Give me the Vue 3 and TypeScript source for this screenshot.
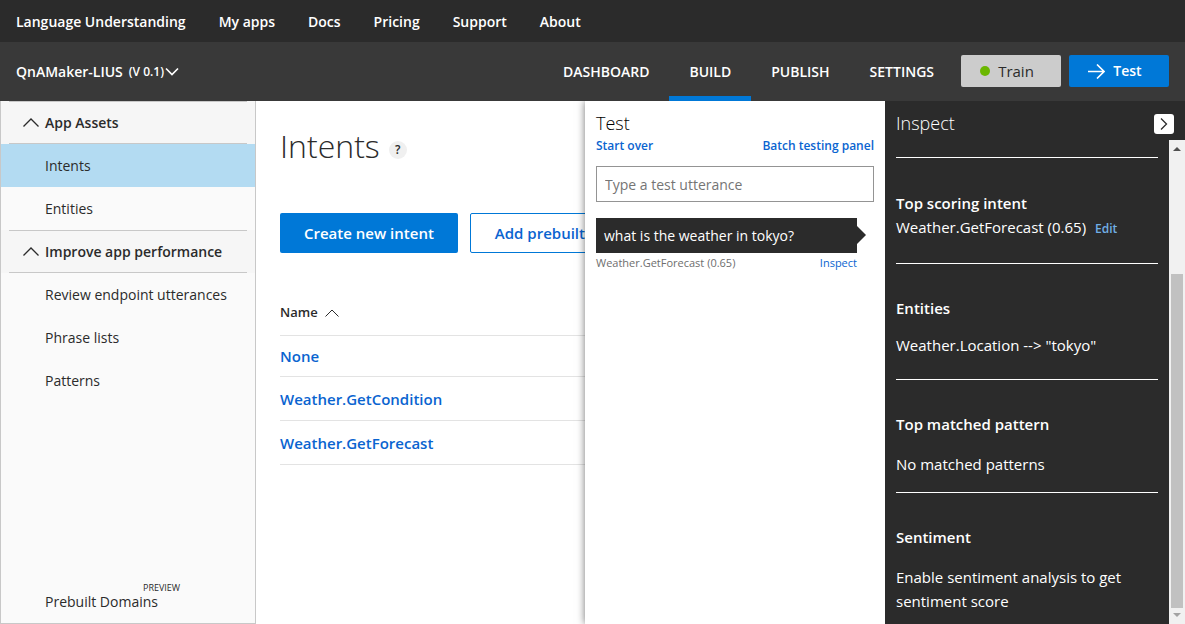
<script setup lang="ts">
import { ref } from 'vue'

interface SideGroup {
  title: string
  items: string[]
}

const siteLinks: string[] = ['Language Understanding', 'My apps', 'Docs', 'Pricing', 'Support', 'About']
const tabs: string[] = ['DASHBOARD', 'BUILD', 'PUBLISH', 'SETTINGS']
const activeTab = ref('BUILD')
const activeItem = ref('Intents')
const utterance = ref('')

const groups: SideGroup[] = [
  { title: 'App Assets', items: ['Intents', 'Entities'] },
  { title: 'Improve app performance', items: ['Review endpoint utterances', 'Phrase lists', 'Patterns'] },
]

const intents: string[] = ['None', 'Weather.GetCondition', 'Weather.GetForecast']
</script>

<template>
  <div class="app">
    <nav class="site-bar">
      <a v-for="link in siteLinks" :key="link" href="#">{{ link }}</a>
    </nav>

    <header class="app-bar">
      <button class="app-name" type="button">
        <span>QnAMaker-LIUS</span>
        <span class="version">(V 0.1)</span>
        <svg width="14" height="9" viewBox="0 0 14 9"><path d="M1 1.5 L7 7.5 L13 1.5" /></svg>
      </button>
      <nav class="tabs">
        <a v-for="tab in tabs" :key="tab" href="#" :class="{ active: tab === activeTab }" @click.prevent="activeTab = tab">{{ tab }}</a>
      </nav>
      <div class="actions">
        <button class="train" type="button"><span class="dot"></span>Train</button>
        <button class="test" type="button">
          <svg width="17" height="15" viewBox="0 0 17 15"><path d="M0 7.5 H16 M9 0.5 L16 7.5 L9 14.5" /></svg>Test
        </button>
      </div>
    </header>

    <div class="body">
      <aside class="sidebar">
        <section v-for="group in groups" :key="group.title">
          <button class="group-head" type="button">
            <span class="group-line">
              <svg width="16" height="9" viewBox="0 0 16 9"><path d="M0.5 8.5 L8 1 L15.5 8.5" /></svg>
              {{ group.title }}
            </span>
          </button>
          <a v-for="item in group.items" :key="item" href="#" class="item" :class="{ active: item === activeItem }" @click.prevent="activeItem = item">{{ item }}</a>
        </section>
        <a href="#" class="item last"><span class="domains">Prebuilt Domains<span class="preview">PREVIEW</span></span></a>
      </aside>

      <main class="main">
        <div class="title-row">
          <h1>Intents</h1>
          <button class="help" type="button" aria-label="Help">?</button>
        </div>
        <div class="buttons">
          <button class="primary" type="button">Create new intent</button>
          <button class="secondary" type="button">Add prebuilt</button>
        </div>
        <table>
          <thead>
            <tr>
              <th scope="col">Name <svg width="14" height="8" viewBox="0 0 14 8"><path d="M0.5 7.5 L7 1 L13.5 7.5" /></svg></th>
            </tr>
          </thead>
          <tbody>
            <tr v-for="intent in intents" :key="intent">
              <td><a href="#">{{ intent }}</a></td>
            </tr>
          </tbody>
        </table>
      </main>

      <section class="test-panel">
        <h2>Test</h2>
        <div class="test-links">
          <a href="#">Start over</a>
          <a href="#">Batch testing panel</a>
        </div>
        <input v-model="utterance" type="text" placeholder="Type a test utterance" aria-label="Type a test utterance" />
        <div class="bubble">what is the weather in tokyo?</div>
        <div class="result">
          <span>Weather.GetForecast (0.65)</span>
          <a href="#">Inspect</a>
        </div>
      </section>

      <section class="inspect">
        <div class="inspect-head">
          <h2>Inspect</h2>
          <button class="collapse" type="button" aria-label="Collapse">
            <svg width="8" height="12" viewBox="0 0 8 12"><path d="M1 0.5 L6.5 6 L1 11.5" /></svg>
          </button>
        </div>
        <div class="inspect-body">
          <div class="details">
            <article class="block scoring">
              <h3>Top scoring intent</h3>
              <p>Weather.GetForecast (0.65) <a href="#">Edit</a></p>
            </article>
            <article class="block entity">
              <h3>Entities</h3>
              <p>Weather.Location --&gt; "tokyo"</p>
            </article>
            <article class="block pattern">
              <h3>Top matched pattern</h3>
              <p>No matched patterns</p>
            </article>
            <article class="block">
              <h3>Sentiment</h3>
              <p>Enable sentiment analysis to get sentiment score</p>
            </article>
          </div>
          <div class="scrollbar" aria-hidden="true">
            <svg class="up" width="16" height="16" viewBox="0 0 16 16"><path d="M4 11 L8 7 L12 11 Z" /></svg>
            <span class="space-above"></span>
            <span class="thumb"></span>
            <svg class="down" width="16" height="16" viewBox="0 0 16 16"><path d="M4 5 L8 9 L12 5 Z" /></svg>
          </div>
        </div>
      </section>
    </div>
  </div>
</template>

<style>
body {
  margin: 0;
}
</style>

<style scoped>
.app {
  display: flex;
  flex-direction: column;
  height: 100vh;
  min-height: 600px;
  overflow: hidden;
  background: #fff;
  color: #2b2b2b;
  font-family: "Open Sans", "Noto Sans", sans-serif;
  font-size: 14px;
  line-height: 24px;
}
.app * {
  box-sizing: border-box;
}
a {
  color: #0a64d0;
  text-decoration: none;
}
button {
  margin: 0;
  padding: 0;
  border: 0;
  background: none;
  color: inherit;
  font: inherit;
  cursor: pointer;
}
h1, h2, h3, p {
  margin: 0;
}
svg {
  flex: none;
}
path {
  fill: none;
  stroke: currentColor;
}
.site-bar {
  display: flex;
  flex: none;
  align-items: center;
  gap: 33px;
  height: 42px;
  padding: 1px 16px 0;
  background: #2b2b2b;
  font-weight: 600;
}
.site-bar a {
  color: #fff;
}
.app-bar {
  display: flex;
  flex: none;
  align-items: center;
  height: 59px;
  padding: 0 16px;
  background: #393939;
  color: #fff;
}
.app-name {
  display: flex;
  align-items: center;
  font-weight: 600;
}
.app-name path {
  stroke-width: 1.7;
}
.version {
  margin: 0 1px 0 6px;
  font-size: 12px;
}
.tabs {
  display: flex;
  align-self: stretch;
  margin-left: auto;
}
.tabs a {
  padding: 18px 20px 12px;
  border-bottom: 5px solid transparent;
  color: #fff;
  font-weight: 600;
}
.tabs a.active {
  border-color: #0078d7;
}
.actions {
  display: flex;
  gap: 8px;
  margin: 0 0 1px 7px;
}
.actions button {
  display: flex;
  align-items: center;
  justify-content: center;
  gap: 8px;
  width: 100px;
  height: 32px;
  padding-right: 8px;
  border-radius: 2px;
}
.actions .train {
  background: #ccc;
  color: #2b2b2b;
  font-size: 15px;
}
.actions .test {
  background: #0078d7;
  font-weight: 600;
}
.test path {
  stroke-width: 1.6;
}
.dot {
  width: 10px;
  height: 10px;
  border-radius: 50%;
  background: #6bb700;
}
.body {
  display: flex;
  flex: 1;
  min-height: 0;
}
.sidebar {
  display: flex;
  flex: none;
  flex-direction: column;
  width: 256px;
  border: 1px solid #c8c8c8;
  border-top: 0;
  background: #fafafa;
}
.group-head {
  display: block;
  width: 100%;
  padding: 0 8px;
  background: #f6f6f6;
  font-size: 14px;
}
.group-line {
  display: flex;
  align-items: center;
  gap: 6px;
  height: 43px;
  padding-left: 14px;
  border: solid #c8c8c8;
  border-width: 1px 0;
  font-weight: 600;
}
.group-line path {
  stroke-width: 1.3;
}
.item {
  display: block;
  padding: 10px 0 9px 44px;
  color: #2b2b2b;
}
.item.active {
  background: #b3dbf2;
}
.item.last {
  margin-top: auto;
}
.domains {
  position: relative;
}
.preview {
  position: absolute;
  left: 98px;
  top: -10px;
  font-size: 9px;
  line-height: 12px;
}
.main {
  flex: 1;
  min-width: 0;
  overflow: hidden;
  padding: 24px 0 0 24px;
}
.title-row {
  display: flex;
  align-items: center;
  gap: 9px;
}
h1 {
  font-size: 32px;
  font-weight: 300;
  line-height: 42px;
}
.help {
  width: 18px;
  height: 18px;
  margin-top: 8px;
  border-radius: 50%;
  background: #f0f0f0;
  font-size: 12px;
  font-weight: 600;
  line-height: 18px;
}
.buttons {
  display: flex;
  gap: 12px;
  margin-top: 46px;
}
.buttons button {
  flex: none;
  height: 40px;
  padding: 0 24px;
  border-radius: 2px;
  font-size: 15px;
  font-weight: 600;
}
.primary {
  background: #0078d7;
  color: #fff;
}
.buttons .secondary {
  width: 232px;
  border: 1px solid #0078d7;
  color: #0a64d0;
  text-align: left;
}
table {
  width: 100%;
  margin-top: 36px;
  border-spacing: 0;
}
th, td {
  height: 44px;
  padding: 0;
  border-bottom: 1px solid #e3e3e3;
  font-weight: 600;
  text-align: left;
}
th {
  height: 47px;
  font-size: 13px;
}
th svg {
  margin-left: 4px;
}
td {
  font-size: 15px;
}
tbody tr:first-child td {
  height: 41px;
}
.test-panel {
  z-index: 1;
  flex: none;
  width: 300px;
  padding: 10px 11px 0 11px;
  background: #fff;
  box-shadow: 0 0 8px rgba(0, 0, 0, 0.55);
  clip-path: inset(0 0 0 -12px);
}
h2 {
  font-size: 18px;
  font-weight: 300;
}
.test-panel h2 {
  color: #000;
}
.test-links {
  display: flex;
  justify-content: space-between;
  font-size: 12px;
  font-weight: 600;
  line-height: 22px;
}
input {
  display: block;
  width: 100%;
  height: 36px;
  margin: 9px 0 16px;
  padding: 0 8px;
  border: 1px solid #949494;
  background: #fff;
  font: inherit;
}
input::placeholder {
  color: #757575;
  opacity: 1;
}
.bubble {
  position: relative;
  height: 35px;
  margin-right: 17px;
  padding: 0 8px;
  background: #2b2b2b;
  color: #fff;
  line-height: 35px;
}
.bubble::after {
  content: "";
  position: absolute;
  left: 100%;
  top: 8px;
  border: 9px solid transparent;
  border-left-color: #2b2b2b;
  border-right: 0;
}
.result {
  display: flex;
  justify-content: space-between;
  margin-right: 17px;
  color: #6e6e6e;
  font-size: 11px;
  line-height: 20px;
}
.inspect {
  display: flex;
  flex: none;
  flex-direction: column;
  width: 300px;
  background: #2b2b2b;
  color: #fff;
}
.inspect-head {
  display: flex;
  flex: none;
  align-items: center;
  justify-content: space-between;
  height: 39px;
  padding: 6px 11px 0;
}
.inspect-head h2 {
  margin-top: -2px;
}
.collapse {
  display: flex;
  align-items: center;
  justify-content: center;
  width: 20px;
  height: 20px;
  border-radius: 3px;
  background: #fff;
  color: #2b2b2b;
}
.collapse path {
  stroke-width: 1.3;
}
.inspect-body {
  display: flex;
  flex: 1;
  min-height: 0;
}
.details {
  flex: 1;
  overflow: hidden;
  padding: 17px 11px 0;
  font-size: 15px;
}
.block {
  padding-top: 32px;
  border-top: 1px solid #fff;
}
h3 {
  font-size: 15px;
  font-weight: 600;
}
.block p {
  margin-top: 16px;
}
.block.scoring {
  padding: 33px 0 24px;
}
.block.scoring p {
  margin-top: 0;
}
.scoring a {
  margin-left: 5px;
  color: #71afe5;
  font-size: 12px;
  font-weight: 600;
  line-height: 12px;
}
.block.entity p {
  margin-top: 13px;
}
.entity {
  padding-bottom: 22px;
}
.pattern {
  padding-bottom: 16px;
}
.scrollbar {
  display: flex;
  flex: none;
  flex-direction: column;
  align-items: center;
  width: 16px;
  background: #f1f1f1;
}
.scrollbar path {
  stroke: none;
}
.up path {
  fill: #505050;
}
.down path {
  fill: #a3a3a3;
}
.space-above {
  flex: 118;
}
.thumb {
  flex: 334;
  width: 12px;
  background: #c1c1c1;
}
</style>
